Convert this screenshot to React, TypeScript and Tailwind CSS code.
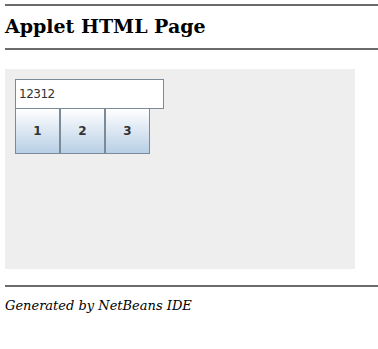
import React from "react";

const Applet = () => {
  return (
    <div className="w-[350px] h-[200px] bg-[#eeeeee] pl-[10px] pt-[10px]">
      <div className="w-[149px] h-[30px] bg-white border border-[#7a8a99] flex items-center pl-[3px]">
        <span className="text-[12px] text-[#333] font-['DejaVu_Sans',sans-serif] tracking-[-0.5px]">
          12312
        </span>
      </div>
      <div className="flex -mt-px">
        {["1", "2", "3"].map((n) => (
          <button
            key={n}
            className="w-[45px] h-[46px] border border-[#7a8a99] bg-gradient-to-b from-white to-[#b8cfe5] text-[12px] font-bold text-[#333] font-['DejaVu_Sans',sans-serif] flex items-center justify-center"
          >
            {n}
          </button>
        ))}
      </div>
    </div>
  );
};

export default function App() {
  return (
    <div className="min-h-[349px] bg-white font-['DejaVu_Serif',serif] text-black pl-[5px] pt-[4px]">
      <div className="h-[2px] bg-[#6b6b6b]" />
      <h2 className="text-[19px] font-bold leading-[22px] mt-[9px] mb-[11px]">
        Applet HTML Page
      </h2>
      <div className="h-[2px] bg-[#6b6b6b]" />
      <div className="mt-[19px]">
        <Applet />
      </div>
      <div className="h-[2px] bg-[#6b6b6b] mt-[16px]" />
      <p className="italic text-[13px] leading-[16px] mt-[11px]">Generated by NetBeans IDE</p>
    </div>
  );
}
